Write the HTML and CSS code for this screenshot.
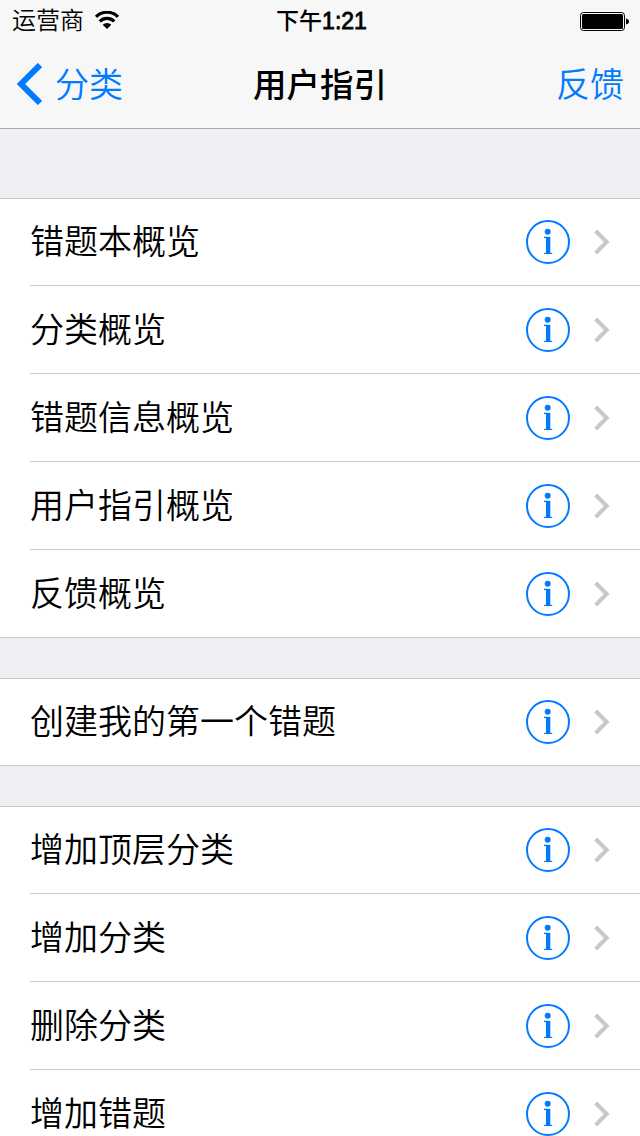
FILE: index.html
```html
<!DOCTYPE html>
<html lang="zh-CN">
<head>
  <meta charset="UTF-8">
  <meta name="viewport" content="width=device-width, initial-scale=1.0">
  <title>用户指引</title>
  <link rel="stylesheet" href="styles.css">
</head>
<body>
  <!-- Shared icons -->
  <svg class="sprite" width="0" height="0">
    <symbol id="info" viewBox="0 0 44 44">
      <circle cx="22" cy="22" r="21" fill="none" stroke="currentColor" stroke-width="2"/>
      <circle cx="21.7" cy="11.8" r="3" fill="currentColor"/>
      <path d="M18 16.800h6.300v16l2 .1V34H18v-1.100l2-.1V18.200l-2-.2z" fill="currentColor"/>
    </symbol>
    <symbol id="chevron" viewBox="0 0 16 26">
      <path d="M1.700 2L12.700 13L1.700 24" fill="none" stroke="currentColor" stroke-width="4"/>
    </symbol>
  </svg>

  <header class="header">
    <div class="status-bar">
      <div class="carrier">
        <span>运营商</span>
        <svg class="wifi" width="24" height="18" viewBox="0 0 24 18">
          <path d="M1 5.800a15.600 15.600 0 0 1 22 0M4.800 10.400a10.200 10.200 0 0 1 14.400 0" fill="none" stroke="#000" stroke-width="3.200"/>
          <path d="M12 18L7.700 13.700a6.100 6.100 0 0 1 8.600 0z"/>
        </svg>
      </div>
      <div class="time">下午<b>1:21</b></div>
      <div class="power">
        <svg width="50" height="20" viewBox="0 0 50 20">
          <rect x=".5" y=".5" width="44" height="18" rx="3" fill="none" stroke="#000"/>
          <rect x="2" y="2" width="41" height="15" rx="1.500"/>
          <path d="M46 6.500c2 .5 3 1.500 3 3s-1 2.500-3 3z"/>
        </svg>
      </div>
    </div>
    <nav class="nav-bar">
      <a class="back">
        <svg width="26" height="42" viewBox="0 0 26 42">
          <path d="M24 2L5 21L24 40" fill="none" stroke="currentColor" stroke-width="6"/>
        </svg>
        <span>分类</span>
      </a>
      <h1 class="title">用户指引</h1>
      <a class="feedback">反馈</a>
    </nav>
  </header>

  <main class="table">
    <ul class="group">
      <li class="row"><span class="label">错题本概览</span><svg class="info"><use href="#info"/></svg><svg class="chevron"><use href="#chevron"/></svg></li>
      <li class="row"><span class="label">分类概览</span><svg class="info"><use href="#info"/></svg><svg class="chevron"><use href="#chevron"/></svg></li>
      <li class="row"><span class="label">错题信息概览</span><svg class="info"><use href="#info"/></svg><svg class="chevron"><use href="#chevron"/></svg></li>
      <li class="row"><span class="label">用户指引概览</span><svg class="info"><use href="#info"/></svg><svg class="chevron"><use href="#chevron"/></svg></li>
      <li class="row"><span class="label">反馈概览</span><svg class="info"><use href="#info"/></svg><svg class="chevron"><use href="#chevron"/></svg></li>
    </ul>
    <ul class="group">
      <li class="row"><span class="label">创建我的第一个错题</span><svg class="info"><use href="#info"/></svg><svg class="chevron"><use href="#chevron"/></svg></li>
    </ul>
    <ul class="group">
      <li class="row"><span class="label">增加顶层分类</span><svg class="info"><use href="#info"/></svg><svg class="chevron"><use href="#chevron"/></svg></li>
      <li class="row"><span class="label">增加分类</span><svg class="info"><use href="#info"/></svg><svg class="chevron"><use href="#chevron"/></svg></li>
      <li class="row"><span class="label">删除分类</span><svg class="info"><use href="#info"/></svg><svg class="chevron"><use href="#chevron"/></svg></li>
      <li class="row"><span class="label">增加错题</span><svg class="info"><use href="#info"/></svg><svg class="chevron"><use href="#chevron"/></svg></li>
    </ul>
  </main>
</body>
</html>
```

FILE: styles.css
```css
* {
  box-sizing: border-box;
}
body {
  display: flex;
  flex-direction: column;
  margin: 0;
  height: 100vh;
  background-color: #efeff4;
  color: #000;
  font-family: "Liberation Sans", "Noto Sans CJK SC", sans-serif;
  font-size: 34px;
  font-weight: 350;
}
.sprite {
  display: block;
}
.header {
  flex: none;
  height: 129px;
  background-color: #f7f7f7;
  border-bottom: 1px solid #a7a7ac;
}

/* Status bar */
.status-bar {
  display: grid;
  grid-template-columns: 1fr auto 1fr;
  align-items: center;
  height: 40px;
  padding: 0 10px 0 12px;
  font-size: 24px;
  line-height: 42px;
}
.carrier {
  display: flex;
  align-items: center;
  gap: 11px;
}
.wifi {
  margin-bottom: 2px;
}
.time {
  padding-left: 1px;
  font-size: 23px;
  font-weight: 500;
}
.time b {
  font-weight: 400;
  -webkit-text-stroke: 0.8px #000;
}
.power {
  display: flex;
  justify-content: flex-end;
  padding-top: 1px;
}

/* Navigation bar */
.nav-bar {
  display: grid;
  grid-template-columns: 1fr auto 1fr;
  align-items: center;
  height: 88px;
  padding: 0 16px;
  line-height: 91px;
}
.back,
.feedback {
  color: #007aff;
}
.back {
  display: flex;
  align-items: center;
  gap: 13px;
}
.back svg {
  margin-bottom: 4px;
}
.title {
  margin: 0;
  font-size: 33.5px;
  font-weight: 500;
}
.feedback {
  text-align: right;
}

/* Grouped list */
.table {
  flex: 1;
  min-height: 0;
  overflow: hidden;
  padding-top: 69px;
}
.group {
  list-style: none;
  margin: 0 0 40px;
  padding: 0;
  background-color: #fff;
  border-top: 1px solid #c8c7cc;
  border-bottom: 1px solid #c8c7cc;
}
.row {
  display: flex;
  align-items: center;
  height: 88px;
  margin-left: 30px;
  padding-right: 30px;
  border-bottom: 1px solid #c8c7cc;
}
.row:first-child {
  height: 87px;
}
.row:last-child {
  height: 87px;
  border-bottom: none;
}
.row:only-child {
  height: 86px;
}
.label {
  flex: 1;
  line-height: 86px;
}
.info {
  width: 44px;
  height: 44px;
  color: #007aff;
}
.chevron {
  width: 16px;
  height: 26px;
  margin-left: 24px;
  color: #c7c7cc;
}
```
